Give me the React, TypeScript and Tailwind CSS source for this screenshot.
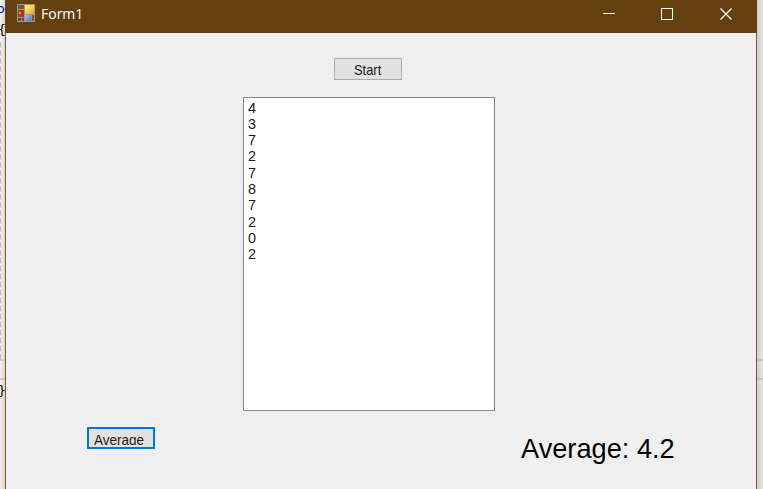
import React from "react";

const values = [4, 3, 7, 2, 7, 8, 7, 2, 0, 2];

function FormIcon() {
  return (
    <svg width="18" height="18" viewBox="0 0 18 18" shapeRendering="crispEdges">
      <defs>
        <linearGradient id="gold" x1="0" y1="0" x2="1" y2="1">
          <stop offset="0" stopColor="#fff0a0" />
          <stop offset="0.5" stopColor="#fbd448" />
          <stop offset="1" stopColor="#e0a020" />
        </linearGradient>
        <linearGradient id="sky" x1="0" y1="0" x2="1" y2="1">
          <stop offset="0" stopColor="#a8ccff" />
          <stop offset="1" stopColor="#3c78dc" />
        </linearGradient>
      </defs>
      <rect width="18" height="18" fill="#a39788" />
      <rect x="1" y="1" width="6" height="4" fill="#765636" />
      <rect x="1" y="6" width="6" height="7" fill="#b92e25" />
      <rect x="2" y="8" width="2" height="2" fill="#ef8980" />
      <rect x="8" y="1" width="9" height="9" fill="url(#gold)" />
      <rect x="1" y="14" width="3" height="3" fill="#6b471e" />
      <rect x="5" y="14" width="2" height="3" fill="#6b471e" />
      <rect x="8" y="11" width="6" height="6" fill="url(#sky)" />
      <rect x="15" y="11" width="2" height="6" fill="#765636" />
    </svg>
  );
}

function TitleBar() {
  return (
    <header className="flex h-[33px] items-start bg-[#65400f]">
      <div className="ml-[12px] mt-1 h-[18px] w-[18px]"><FormIcon /></div>
      <h1 className="ml-[6px] mt-[4px] font-['Open_Sans',sans-serif] text-[14px] leading-5 text-white">Form1</h1>
      <svg className="ml-auto mr-[24px] mt-[8px]" width="130" height="13" fill="none" stroke="white">
        <path d="M0 5.5h12M58.5.5h11v11h-11z" shapeRendering="crispEdges" />
        <path d="m117.500 0.500 11 11m0-11-11 11" strokeWidth="1.2" />
      </svg>
    </header>
  );
}

function Form() {
  return (
    <main className="w-[752px] shrink-0 border-x border-[#7b5a30] bg-[#efefef]">
      <div className="-mx-px"><TitleBar /></div>
      <div className="flex flex-col">
        <button className="ml-[328px] mt-[25px] h-[22px] w-[68px] border border-[#adadad] bg-[#e1e1e1] pt-[2px] text-[15px] leading-[18px]">
          <span className="inline-block w-[29px] origin-left scale-x-[0.86] text-left">Start</span>
        </button>
        <ul className="ml-[237px] mt-[17px] h-[314px] w-[252px] border border-[#828790] bg-white pl-[4px] pt-[1.6px] text-[15px] leading-[16.3px]">
          {values.map((value, index) => <li key={index} className="origin-left scale-x-[0.96]">{value}</li>)}
        </ul>
        <div className="mt-[16px] flex items-start">
          <button className="ml-[81px] flex h-[22px] w-[68px] border-2 border-[#0078d7] bg-[#e1e1e1] pl-[5px] pt-[1px]">
            <span className="block h-[15px] w-[60px] origin-left scale-x-[0.9] overflow-hidden text-left text-[15px] leading-[20px]">Average</span>
          </button>
          <p className="ml-[366px] mt-[6px] whitespace-nowrap text-[27.2px] leading-8 text-black">Average: 4.2</p>
        </div>
      </div>
    </main>
  );
}

export default function App() {
  return (
    <div className="flex h-[489px] w-[763px] overflow-hidden bg-[#e2e2e2] font-['Liberation_Sans',Arial,sans-serif] text-[#1a1a1a]">
      <aside className="h-full w-[5px] shrink-0 overflow-hidden bg-gradient-to-r from-[#f3f3f3] to-[#d6d6d6] font-['DejaVu_Sans_Mono',monospace] text-[13px]">
        <div className="-ml-[3px] h-[20px] leading-[18px] text-[#0000e8]">o</div>
        <div className="-ml-[2px] h-[22px] leading-[20px] text-black">{"{"}</div>
        <div className="h-[317px] w-px bg-[repeating-linear-gradient(to_bottom,#bbb_0_5px,transparent_5px_8px)]" />
        <div className="h-[21px] border-y-2 border-[#c5c5cc]" />
        <div className="-ml-[2px] leading-[22px] text-black">{"}"}</div>
      </aside>
      <Form />
      <aside className="h-full w-[6px] shrink-0 bg-gradient-to-r from-[#cecece] to-[#e5e5e5] pt-[359px]">
        <div className="h-[21px] border-y-2 border-[#c5c5cc]" />
      </aside>
    </div>
  );
}
